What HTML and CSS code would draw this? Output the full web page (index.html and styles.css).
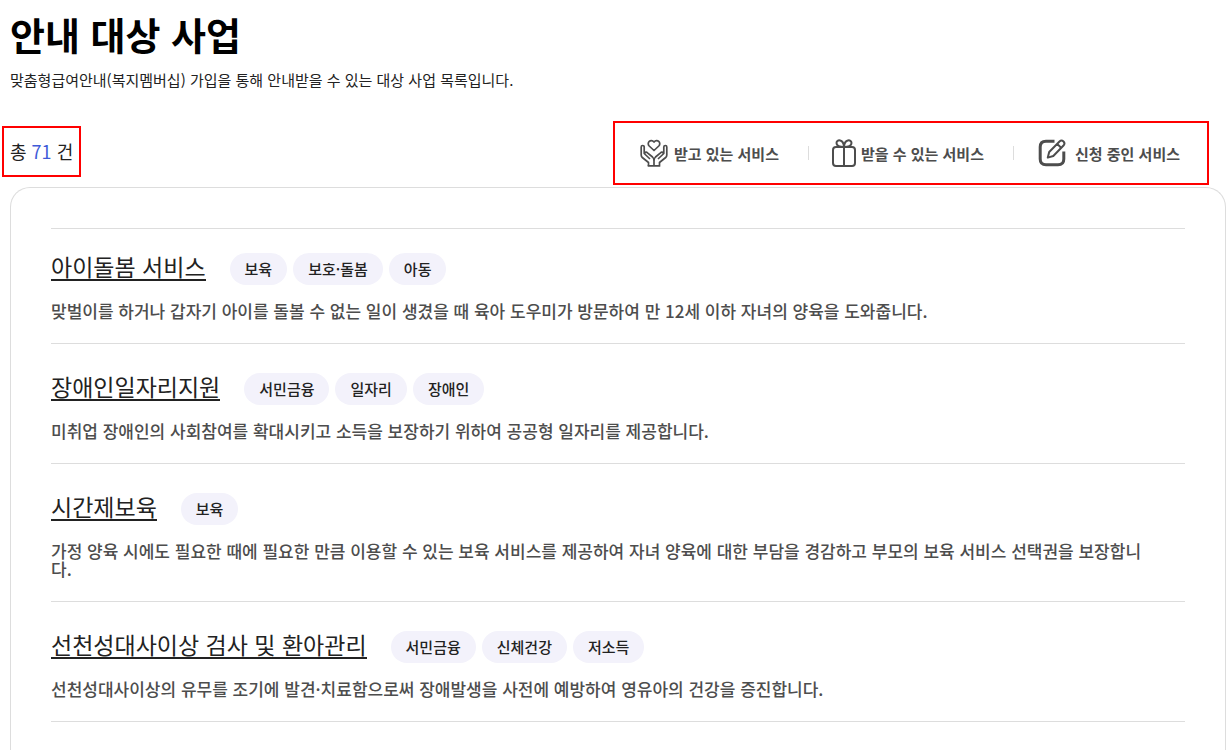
FILE: index.html
```html
<!DOCTYPE html>
<html lang="ko">

<head>
    <meta charset="UTF-8">
    <meta name="viewport" content="width=device-width, initial-scale=1.0">
    <title>안내 대상 사업</title>
    <link rel="stylesheet" href="styles.css">
</head>

<body>
    <header class="page-head">
        <h1>안내 대상 사업</h1>
        <p>맞춤형급여안내(복지멤버십) 가입을 통해 안내받을 수 있는 대상 사업 목록입니다.</p>
    </header>

    <div class="toolbar">
        <p class="total">총 <strong>71</strong> 건</p>

        <nav class="legend">
            <a href="#receiving">
                <svg width="28" height="28" viewBox="0 0 28 28">
                    <path d="M14 11.5 L9.2 7 C6.2 3.8 10.8 -0.8 14 3 C17.2 -0.8 21.8 3.8 18.8 7 Z" />
                    <path d="M8.5 27 V23.5 L2.3 18.5 Q1.2 17.5 1.2 16 V8 Q1.2 6.5 2.6 6.5 Q4.2 6.5 4.2 8 V14.5 L10 20 M4.5 14.5 Q5.8 12.2 7.5 13.8 L12.5 18 Q14 19.5 14 21.5 V27" />
                    <path d="M19.5 27 V23.5 L25.7 18.5 Q26.8 17.5 26.8 16 V8 Q26.8 6.5 25.4 6.5 Q23.8 6.5 23.8 8 V14.5 L18 20 M23.5 14.5 Q22.2 12.2 20.5 13.8 L15.5 18 Q14 19.5 14 21.5 M7.7 26.8 H20.3" />
                </svg>
                <span>받고 있는 서비스</span>
            </a>
            <a href="#available" class="gift">
                <svg width="24" height="28" viewBox="0 0 24 28">
                    <rect x="1" y="8" width="22" height="19" rx="3" />
                    <path d="M12 8 V27 M12 8 C7 8 4.5 6.5 4.5 4 C4.5 0 11.5 0 12 7.5 M12 8 C17 8 19.5 6.5 19.5 4 C19.5 0 12.5 0 12 7.5" />
                </svg>
                <span>받을 수 있는 서비스</span>
            </a>
            <a href="#applying" class="apply">
                <svg width="28" height="28" viewBox="0 0 28 28">
                    <path d="M16.5 2.2 H8 Q2.2 2.2 2.2 8 V20 Q2.2 25.8 8 25.8 H20 Q25.8 25.8 25.8 20 V12.5" />
                    <path d="M9.8 18.6 L11.2 13 L21.5 2.5 Q23.5 0.6 25.5 2.5 Q27.4 4.5 25.5 6.5 L15.3 17 Z M19.2 4.9 L23.1 8.8" />
                </svg>
                <span>신청 중인 서비스</span>
            </a>
        </nav>
    </div>

    <main class="panel">
        <ul class="service-list">
            <li>
                <div class="service-top">
                    <a href="#childcare">아이돌봄 서비스</a>
                    <ul class="tags">
                        <li>보육</li>
                        <li>보호·돌봄</li>
                        <li>아동</li>
                    </ul>
                </div>
                <p>맞벌이를 하거나 갑자기 아이를 돌볼 수 없는 일이 생겼을 때 육아 도우미가 방문하여 만 12세 이하 자녀의 양육을 도와줍니다.</p>
            </li>
            <li>
                <div class="service-top">
                    <a href="#jobs">장애인일자리지원</a>
                    <ul class="tags">
                        <li>서민금융</li>
                        <li>일자리</li>
                        <li>장애인</li>
                    </ul>
                </div>
                <p>미취업 장애인의 사회참여를 확대시키고 소득을 보장하기 위하여 공공형 일자리를 제공합니다.</p>
            </li>
            <li>
                <div class="service-top">
                    <a href="#hourly">시간제보육</a>
                    <ul class="tags">
                        <li>보육</li>
                    </ul>
                </div>
                <p>가정 양육 시에도 필요한 때에 필요한 만큼 이용할 수 있는 보육 서비스를 제공하여 자녀 양육에 대한 부담을 경감하고 부모의 보육 서비스 선택권을 보장합니다.</p>
            </li>
            <li>
                <div class="service-top">
                    <a href="#screening">선천성대사이상 검사 및 환아관리</a>
                    <ul class="tags">
                        <li>서민금융</li>
                        <li>신체건강</li>
                        <li>저소득</li>
                    </ul>
                </div>
                <p>선천성대사이상의 유무를 조기에 발견·치료함으로써 장애발생을 사전에 예방하여 영유아의 건강을 증진합니다.</p>
            </li>
        </ul>
    </main>
</body>

</html>
```

FILE: styles.css
```css
* {
    margin: 0;
    padding: 0;
    box-sizing: border-box;
}

body {
    padding: 0 5px 0 10px;
    font-family: "Noto Sans CJK KR", "Noto Sans", sans-serif;
    font-size: 15px;
    color: #222;
    background-color: #fff;
}

ul {
    list-style: none;
}

a {
    color: inherit;
    text-decoration: none;
}

.page-head {
    padding-top: 6px;
}

.page-head h1 {
    font-size: 38px;
    line-height: 56px;
    font-weight: 700;
    color: #000;
}

.page-head p {
    margin-top: 7px;
    line-height: 22px;
}

/* 건수 / 서비스 구분 */
.toolbar {
    display: flex;
    justify-content: space-between;
    align-items: center;
    margin: 30px 17px 2px -8px;
}

.total {
    padding: 0 6px;
    margin-bottom: 3px;
    border: 2px solid #f00;
    font-size: 18px;
    line-height: 47px;
}

.total strong {
    font-weight: 400;
    color: #3f5bd8;
}

.legend {
    display: flex;
    align-items: center;
    height: 64px;
    border: 2px solid #f00;
}

.legend a {
    display: flex;
    align-items: center;
    gap: 6px;
    padding: 0 29px 0 25px;
    font-weight: 700;
    color: #4d4d4d;
}

.legend a + a::before {
    content: "";
    width: 1px;
    height: 14px;
    margin-right: 18px;
    background-color: #ddd;
}

.legend a + a {
    padding-left: 0;
}

.legend .gift {
    gap: 5px;
}

.legend .apply {
    gap: 9px;
    padding-right: 27px;
}

.legend .apply::before {
    margin-right: 15px;
}

.legend svg {
    fill: none;
    stroke: #4d4d4d;
    stroke-width: 2;
    stroke-linejoin: round;
}

.legend a:first-child svg {
    stroke-width: 1.7;
}

.legend .apply svg {
    stroke-width: 3;
}

.legend .apply svg path + path {
    stroke-width: 2;
}

/* 목록 */
.panel {
    padding: 40px 40px 28px;
    border: 1px solid #ddd;
    border-bottom: 0;
    border-radius: 20px 20px 0 0;
}

.service-list {
    border-top: 1px solid #ddd;
}

.service-list > li {
    padding: 29px 40px 23px 0;
    border-bottom: 1px solid #ddd;
}

.service-list > li:first-child {
    padding-top: 24px;
}

.service-top {
    display: flex;
    align-items: flex-start;
    gap: 24px;
}

.service-top a {
    font-size: 23px;
    line-height: 26px;
    border-bottom: 2px solid #222;
}

.tags {
    display: flex;
    gap: 6px;
}

.tags li {
    padding: 0 15px;
    border-radius: 16px;
    font-weight: 500;
    line-height: 32px;
    background-color: #f3f2fb;
}

.service-list p {
    margin-top: 17px;
    font-size: 17px;
    font-weight: 500;
    line-height: 18px;
    color: #4d4d4d;
}
```
